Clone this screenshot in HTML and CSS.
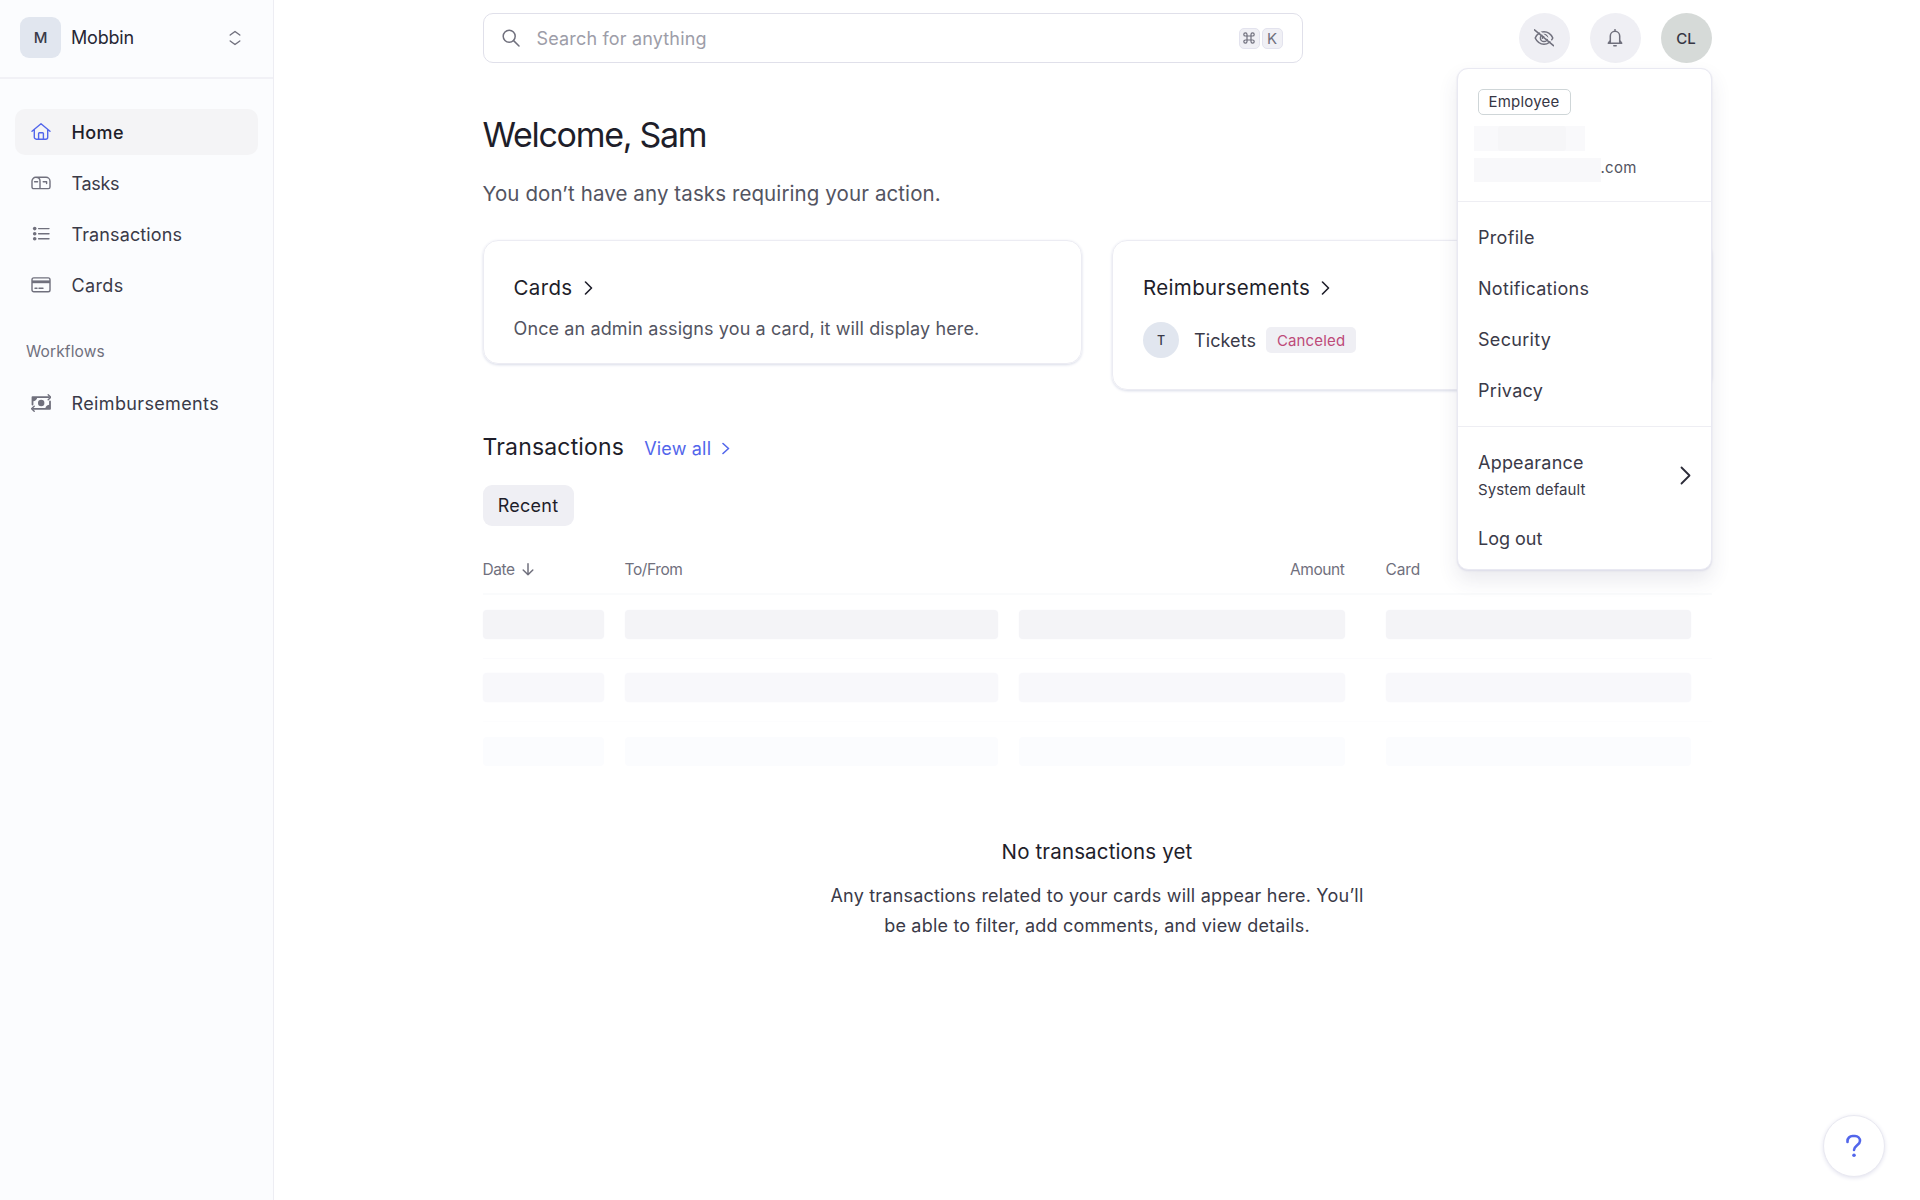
FILE: index.html
```html
<!DOCTYPE html>
<html lang="en">
<head>
<meta charset="utf-8">
<title>Home</title>
<link rel="stylesheet" href="styles.css">
</head>
<body>
<div class="app">
  <aside class="sidebar">
    <div class="workspace">
      <span class="workspace-badge">M</span>
      <span class="workspace-name">Mobbin</span>
      <svg class="workspace-toggle" width="12" height="16" viewBox="0 0 12 16"><path d="M1.200 5 6 1.500 10.800 5M1.200 11 6 14.500 10.800 11"/></svg>
    </div>
    <nav class="nav">
      <a class="nav-item active"><svg class="icon" viewBox="0 0 20 20"><path d="M1 9.200 10 1.800l9 7.400M3.300 7.600v7.600a2 2 0 0 0 2 2h9.400a2 2 0 0 0 2-2V7.600M7.600 17v-5.400a.8.8 0 0 1 .8-.8h3.200a.8.8 0 0 1 .8.8V17"/></svg><span class="nav-label">Home</span></a>
      <a class="nav-item"><svg class="icon" viewBox="0 0 20 20"><path d="M4.800 4.300h10.200a4 4 0 0 1 4 4v5.700a1.600 1.600 0 0 1-1.600 1.600H2.600A1.600 1.600 0 0 1 1 14V8.100a3.800 3.800 0 0 1 3.800-3.800c2.400 0 4.200 1.600 4.200 3.800v7.500M3.600 8.700h3M12.200 8.700h3.400v1.800"/></svg><span class="nav-label tight">Tasks</span></a>
      <a class="nav-item"><svg class="icon" viewBox="0 0 20 20"><path d="M7.600 4.600H18M7.600 9.700H18M7.600 14.800H18"/><g class="solid"><circle cx="3.700" cy="4.600" r="1.800"/><circle cx="3.700" cy="9.700" r="1.800"/><circle cx="3.700" cy="14.800" r="1.800"/></g></svg><span class="nav-label">Transactions</span></a>
      <a class="nav-item"><svg class="icon" viewBox="0 0 20 20"><rect x="1" y="2.900" width="18" height="13.800" rx="1.800"/><path class="thick" d="M1 6.800h18"/><path d="M4 13.200h2M8 13.200h4"/></svg><span class="nav-label wide">Cards</span></a>
      <h2 class="nav-heading">Workflows</h2>
      <a class="nav-item"><svg class="icon" viewBox="0 0 20 20"><path class="heavy" d="M1.500 11.500V4.200H18M19 8.500v7.300H2.400"/><path d="M17.200 1.700 19.800 4.200 17.200 6.700M3.200 13.300.6 15.800l2.600 2.500"/><path class="solid" d="M1.500 4.200h4.700a4.200 4.200 0 0 1-4.700 4zM19 15.800h-4.700a4.200 4.200 0 0 1 4.700-4z"/><circle class="solid" cx="10.200" cy="10" r="3.200"/></svg><span class="nav-label wide">Reimbursements</span></a>
    </nav>
  </aside>

  <main class="main">
    <div class="content">
      <header class="topbar">
        <div class="search">
          <svg class="search-icon" width="18" height="18" viewBox="0 0 18 18"><circle cx="7.200" cy="7.200" r="6"/><path d="M11.600 11.600 17 17"/></svg>
          <span class="search-text">Search for anything</span>
          <kbd class="key"><svg width="12" height="12" viewBox="0 0 12 12"><path d="M4 4h4v4H4zM4 4V2.400A1.600 1.600 0 1 0 2.400 4H4M8 4h1.600A1.600 1.600 0 1 0 8 2.400V4M8 8v1.600A1.600 1.600 0 1 0 9.600 8H8M4 8H2.400A1.600 1.600 0 1 0 4 9.600V8"/></svg></kbd>
          <kbd class="key">K</kbd>
        </div>
        <div class="actions">
          <button class="round"><svg width="20" height="18" viewBox="0 0 20 18"><path d="M1.200 9C3 5.200 6.200 2.800 10 2.800S17 5.200 18.800 9C17 12.800 13.800 15.200 10 15.200S3 12.800 1.200 9z"/><circle cx="10" cy="9" r="3.600"/><path d="M8.500 9.200A1.600 1.600 0 0 1 10 7.500"/><path class="gap" d="M1.800-.7 20.800 15.200"/><path d="M.5.800 19.500 16.700"/></svg></button>
          <button class="round"><svg width="16" height="18" viewBox="0 0 16 18"><path d="M8 .6v1.200M3.300 13V7a4.700 4.700 0 0 1 9.400 0v6M3.300 11.500 1.300 14.200h13.400l-2-2.700M6.800 16.700h2.400"/></svg></button>
          <div class="account">
            <button class="round avatar">CL</button>
            <div class="menu">
              <section class="menu-head">
                <span class="role">Employee</span>
                <div class="redacted-name"><i></i></div>
                <div class="mail"><i></i><span class="mail-text">.com</span></div>
              </section>
              <section class="menu-links">
                <a class="menu-item">Profile</a>
                <a class="menu-item">Notifications</a>
                <a class="menu-item">Security</a>
                <a class="menu-item">Privacy</a>
              </section>
              <section class="menu-foot">
                <a class="appearance"><span class="appearance-text"><span class="menu-title">Appearance</span><small class="menu-note">System default</small></span><svg class="chev-lg" width="11" height="19" viewBox="0 0 11 19"><path d="M1.500 1.500 9.500 9.500 1.500 17.500"/></svg></a>
                <a class="menu-item logout">Log out</a>
              </section>
            </div>
          </div>
        </div>
      </header>

      <h1 class="title">Welcome, Sam</h1>
      <p class="subtitle">You don’t have any tasks requiring your action.</p>

      <div class="panels">
        <section class="panel">
          <h2 class="panel-title">Cards<svg class="chev" width="9" height="14" viewBox="0 0 9 14"><path d="M1.500 1 7.500 7l-6 6"/></svg></h2>
          <p class="panel-text">Once an admin assigns you a card, it will display here.</p>
        </section>
        <section class="panel">
          <h2 class="panel-title">Reimbursements<svg class="chev" width="9" height="14" viewBox="0 0 9 14"><path d="M1.500 1 7.500 7l-6 6"/></svg></h2>
          <div class="claim"><span class="claim-mark">T</span><span class="claim-name">Tickets</span><span class="claim-status">Canceled</span></div>
        </section>
      </div>

      <div class="section-head">
        <h2 class="section-title">Transactions</h2>
        <a class="view-all">View all<svg class="chev" width="8" height="13" viewBox="0 0 8 13"><path d="M1 1.500l5.500 5L1 11.500"/></svg></a>
      </div>
      <button class="tab">Recent</button>

      <div class="table">
        <div class="row head">
          <span class="sort">Date<svg width="12" height="13" viewBox="0 0 12 13"><path d="M6 .8v11M1.200 7 6 11.800 10.800 7"/></svg></span>
          <span>To/From</span>
          <span class="right">Amount</span>
          <span class="col-card">Card</span>
        </div>
        <div class="row ghost one"><i></i><i></i><i></i><i class="col-card"></i></div>
        <div class="row ghost two"><i></i><i></i><i></i><i class="col-card"></i></div>
        <div class="row ghost three"><i></i><i></i><i></i><i class="col-card"></i></div>
      </div>

      <div class="empty">
        <h3 class="empty-title">No transactions yet</h3>
        <p class="empty-text">Any transactions related to your cards will appear here. You’ll<br>be able to filter, add comments, and view details.</p>
      </div>
    </div>
  </main>
  <button class="help"><svg width="16" height="24" viewBox="0 0 16 24"><path d="M1.500 8V7a5 5 0 0 1 5-5h2.500a5 5 0 0 1 5 5c0 4-6 4.600-6 9"/><circle class="solid" cx="8" cy="21.300" r="1.800"/></svg></button>
</div>
</body>
</html>
```
FILE: styles.css
```css
* { box-sizing: border-box; margin: 0; padding: 0; }
body { font-family: Inter, "Liberation Sans", sans-serif; font-size: 18px; color: #3a3a48; background: #fff; }
i { font-style: normal; display: block; }
button { font: inherit; border: 0; background: none; color: inherit; }
h1, h2, h3 { font-weight: 400; }
svg { display: block; flex: none; fill: none; stroke: currentColor; stroke-width: 1.5; stroke-linecap: round; stroke-linejoin: round; }
.solid { fill: currentColor; stroke: none; }
.app { display: flex; height: 1200px; overflow: hidden; }

/* Sidebar */
.sidebar { width: 274px; flex: none; background: #fbfcfe; border-right: 1px solid #ededf3; }
.workspace { height: 79px; padding: 17px 32px 19px 20px; display: flex; align-items: center; border-bottom: 2px solid #f1f1f6; }
.workspace-badge { width: 41px; height: 41px; border-radius: 9px; background: #e1e6ef; font-size: 15px; font-weight: 500; display: flex; align-items: center; justify-content: center; }
.workspace-name { flex: 1; margin-left: 10px; color: #272735; letter-spacing: -.19px; }
.workspace-toggle { color: #70707d; stroke-width: 1.4; }
.nav { padding: 30px 15px 0; display: flex; flex-direction: column; gap: 5px; }
.nav-item { height: 46px; border-radius: 10px; padding-left: 15.500px; display: flex; align-items: center; gap: 21px; }
.nav-item.active { background: #f4f4f6; color: #1e1e2a; font-weight: 500; }
.nav-item.active .nav-label { letter-spacing: .4px; }
.icon { width: 20px; height: 20px; color: #70707d; stroke-width: 1.4; }
.active .icon { color: #5266eb; }
.thick { stroke-width: 2.8; stroke-linecap: butt; }
.heavy { stroke-width: 1.8; }
.nav-label { letter-spacing: .12px; }
.nav-label.tight { letter-spacing: -.3px; }
.nav-label.wide { letter-spacing: .36px; }
.nav-heading { font-size: 15.500px; line-height: 20px; letter-spacing: .12px; color: #70707d; padding: 29px 0 13px 11px; }

/* Top bar */
.main { flex: 1; }
.content { width: 1229px; margin: 0 auto; padding-top: 13px; }
.topbar { display: flex; justify-content: space-between; }
.search { width: 820px; height: 50px; border: 1px solid #e0e0ea; border-radius: 10px; padding: 0 19px 0 18px; display: flex; align-items: center; }
.search-icon { color: #70707d; }
.search-text { flex: 1; margin-left: 17px; color: #9d9da8; letter-spacing: .17px; }
.key { width: 21px; height: 21px; margin-left: 2px; border: 1px solid #e3e3ee; border-radius: 5px; background: #f0f0f5; color: #70707d; font: 15px Inter, sans-serif; display: flex; align-items: center; justify-content: center; }
.key svg { stroke-width: 1.2; }
.actions { display: flex; gap: 20px; }
.round { width: 51px; height: 50px; border-radius: 50%; background: #efeff4; color: #70707d; display: flex; align-items: center; justify-content: center; }
.gap { stroke: #efeff4; }
.avatar { background: #d6dad8; color: #363644; font-size: 15px; font-weight: 500; }
.account { position: relative; }

/* Account menu */
.menu { position: absolute; z-index: 2; top: 55px; right: 0; width: 255px; height: 502px; border: 1px solid #e9e9f2; border-radius: 11px; background: #fff; box-shadow: 0 1px 2px #dcdce8, 0 10px 20px rgba(60,60,100,.11); }
.menu section { padding: 0 20px; }
.menu .menu-head { height: 133px; padding: 20px 16px; border-bottom: 1px solid #eeeef3; }
.role { display: flex; width: 93px; height: 26px; margin-left: 4px; padding-bottom: 2px; border: 1px solid #cfd6d8; border-radius: 5px; align-items: center; justify-content: center; font-size: 15px; letter-spacing: .2px; color: #363644; }
.redacted-name { width: 111px; height: 25px; margin-top: 11px; background: #f9f9fb; padding: 0 19px 0 24px; }
.redacted-name i { height: 25px; background: #f6f6f8; border-radius: 3px; }
.mail { margin-top: 7px; display: flex; height: 24px; }
.mail i { width: 127px; background: #f8f8fa; }
.mail-text { font-size: 15px; line-height: 20px; letter-spacing: .3px; color: #535461; }
.menu .menu-links { height: 225px; padding: 10px 20.500px 0; border-bottom: 1px solid #eeeef3; }
.menu-item { display: block; height: 51px; line-height: 51px; letter-spacing: .3px; }
.menu-item.logout { letter-spacing: 0; }
.menu .menu-foot { padding: 22px 20px 0 20.500px; }
.appearance { display: flex; justify-content: space-between; align-items: center; height: 53px; margin-bottom: 11px; }
.appearance-text { display: flex; flex-direction: column; }
.menu-title { line-height: 28px; letter-spacing: .22px; }
.menu-note { font-size: 15px; line-height: 25px; letter-spacing: .1px; }
.chev-lg { color: #2b2b38; stroke-width: 1.8; }

/* Home content */
.title { margin-top: 50px; font-size: 34px; line-height: 44px; letter-spacing: -1.3px; color: #1e1e2a; }
.subtitle { margin-top: 22px; font-size: 20.500px; line-height: 30px; letter-spacing: .1px; color: #535461; }
.panels { margin-top: 31px; display: grid; grid-template-columns: 1fr 1fr; gap: 30px; align-items: start; }
.panel { border: 1px solid #ececf3; border-radius: 15px; padding: 32px 30px; box-shadow: 0 1px 3px #d8dbe8; height: 124px; }
.panel + .panel { height: 150px; }
.panel-title { font-size: 20.500px; line-height: 30px; letter-spacing: .35px; display: flex; align-items: center; gap: 11px; color: #1e1e2a; }
.chev { stroke-width: 1.6; }
.panel-text { margin-top: 10px; line-height: 32px; letter-spacing: .12px; color: #535461; }
.claim { margin-top: 19px; display: flex; align-items: center; height: 36px; }
.claim-mark { width: 36px; height: 36px; border-radius: 50%; background: #e1e6ef; font-size: 12.500px; font-weight: 500; display: flex; align-items: center; justify-content: center; }
.claim-name { margin-left: 15px; letter-spacing: .09px; }
.claim-status { margin-left: 10px; width: 90px; height: 26px; border-radius: 5px; background: #efeff4; color: #bd4a79; font-size: 15px; letter-spacing: .15px; display: flex; align-items: center; justify-content: center; }

/* Transactions */
.section-head { margin-top: 42px; height: 30px; display: flex; align-items: center; gap: 20px; }
.section-title { font-size: 23px; letter-spacing: .18px; color: #1e1e2a; }
.view-all { color: #5266eb; letter-spacing: .18px; padding-top: 2px; display: flex; align-items: center; gap: 11px; }
.tab { display: flex; margin-top: 23px; width: 91px; height: 41px; border-radius: 9px; background: #efeff4; color: #1e1e2a; letter-spacing: .25px; align-items: center; justify-content: center; }
.table { margin-top: 24px; }
.row { display: grid; grid-template-columns: 121.500px 373.500px 326px 326px; column-gap: 20.500px; height: 63.500px; align-items: center; border-bottom: 1px solid #fbfbfd; }
.row.head { height: 45px; font-size: 15.500px; letter-spacing: -.4px; color: #70707d; padding-bottom: 4px; border-bottom: 2px solid #fafbfc; }
.sort { display: flex; align-items: center; gap: 7px; }
.right { text-align: right; }
.col-card { margin-left: 20.500px; }
.row.head .col-card { letter-spacing: -.1px; }
.ghost { padding-bottom: 4px; }
.ghost i { height: 29px; border-radius: 4px; background: #f4f4f7; box-shadow: 0 0 2px #f8f8fb; }
.two { border-color: #fdfdfe; }
.two i { background: #f8f8fb; }
.three { border: 0; }
.three i { background: #fbfcfe; box-shadow: none; }
.empty { margin-top: 51px; text-align: center; }
.empty-title { font-size: 20.500px; line-height: 30px; letter-spacing: .15px; color: #1e1e2a; }
.empty-text { margin-top: 14px; line-height: 30.600px; letter-spacing: .2px; }

.help { position: absolute; left: 1823px; top: 1115px; width: 62px; height: 62px; border: 1px solid #e9e9f1; border-radius: 50%; background: #fff; color: #5266eb; display: flex; align-items: center; justify-content: center; box-shadow: 0 1px 4px #e2e2ee; }
.help svg { stroke-width: 2.600; }
```
